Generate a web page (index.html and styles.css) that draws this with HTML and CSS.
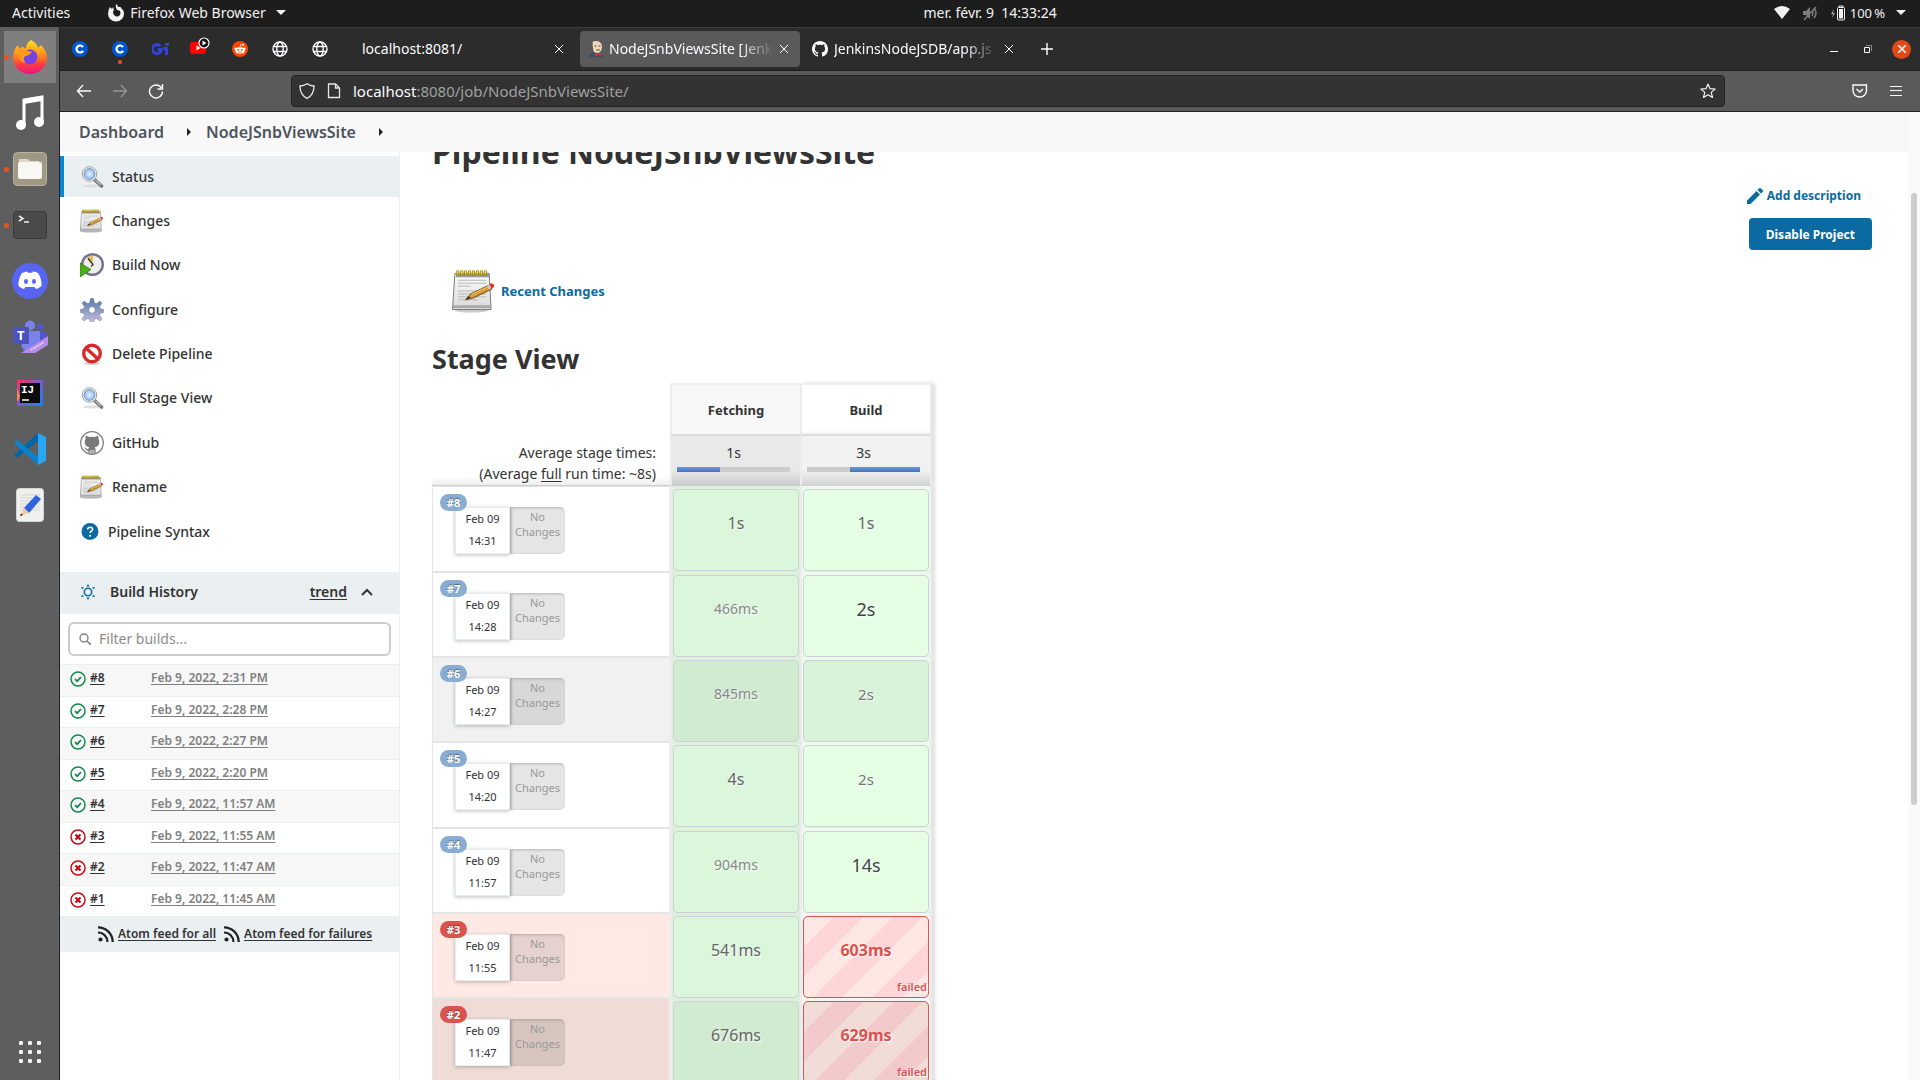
FILE: index.html
```html
<!DOCTYPE html>
<html lang="en">
<head>
<meta charset="utf-8">
<title>NodeJSnbViewsSite [Jenkins]</title>
<link rel="stylesheet" href="styles.css">
</head>
<body>
<svg class="defs" aria-hidden="true">
  <defs>
    <linearGradient id="g-fox" x1="0" y1="0" x2="0" y2="1"><stop offset="0" stop-color="#ffe226"/><stop offset=".45" stop-color="#ff8a16"/><stop offset=".75" stop-color="#ff3647"/><stop offset="1" stop-color="#e31587"/></linearGradient>
    <linearGradient id="g-paper" x1="0" y1="0" x2="0" y2="1"><stop offset="0" stop-color="#fdfdfd"/><stop offset="1" stop-color="#d8d8d8"/></linearGradient>
    <linearGradient id="g-gear" x1="0" y1="0" x2="0" y2="1"><stop offset="0" stop-color="#5a78a8"/><stop offset="1" stop-color="#c4bfdc"/></linearGradient>
    <linearGradient id="g-ij" x1="0" y1="0" x2="1" y2="1"><stop offset="0" stop-color="#fe2d6a"/><stop offset=".5" stop-color="#7a5bd0"/><stop offset="1" stop-color="#0a84ff"/></linearGradient>
    <radialGradient id="g-lens"><stop offset="0" stop-color="#eaf4fe"/><stop offset="1" stop-color="#8db9ea"/></radialGradient>
  </defs>
  <symbol id="i-close" viewBox="0 0 10 10"><path d="M1 1l8 8M9 1L1 9" stroke="currentColor" fill="none"/></symbol>
  <symbol id="i-globe" viewBox="0 0 16 16"><g fill="none" stroke="#fbfbfe" stroke-width="1.4"><circle cx="8" cy="8" r="7"/><ellipse cx="8" cy="8" rx="3.2" ry="7"/><path d="M1.5 5.5h13M1.5 10.5h13"/></g></symbol>
  <symbol id="i-octo" viewBox="0 0 16 16"><path fill="currentColor" d="M8 0C3.58 0 0 3.58 0 8c0 3.54 2.29 6.53 5.47 7.59.4.07.55-.17.55-.38 0-.19-.01-.82-.01-1.49-2.01.37-2.53-.49-2.69-.94-.09-.23-.48-.94-.82-1.13-.28-.15-.68-.52-.01-.53.63-.01 1.08.58 1.23.82.72 1.21 1.87.87 2.33.66.07-.52.28-.87.51-1.07-1.78-.2-3.64-.89-3.64-3.95 0-.87.31-1.59.82-2.15-.08-.2-.36-1.02.08-2.12 0 0 .67-.21 2.2.82.64-.18 1.32-.27 2-.27s1.36.09 2 .27c1.53-1.04 2.2-.82 2.2-.82.44 1.1.16 1.92.08 2.12.51.56.82 1.27.82 2.15 0 3.07-1.87 3.75-3.65 3.95.29.25.54.73.54 1.48 0 1.07-.01 1.93-.01 2.2 0 .21.15.46.55.38A8.01 8.01 0 0016 8c0-4.42-3.58-8-8-8z"/></symbol>
  <symbol id="i-c" viewBox="0 0 16 16"><circle cx="8" cy="8" r="8" fill="#0056d2"/><path d="M11 6.1A3.5 3.5 0 1 0 11 9.9" fill="none" stroke="#fff" stroke-width="2.2"/></symbol>
  <symbol id="i-search" viewBox="0 0 24 24"><ellipse cx="11" cy="21" rx="8" ry="1.5" fill="#ddd"/><path d="M14.500 14.500l7 6.500" stroke="#777" stroke-width="3.600" stroke-linecap="round"/><path d="M15.500 15l5.500 5" stroke="#bbb" stroke-width="1.400"/><circle cx="9.500" cy="9" r="7.300" fill="#f2f2f2" stroke="#a2a2a2"/><circle cx="9.500" cy="9" r="5.400" fill="url(#g-lens)" stroke="#6f97c6"/></symbol>
  <symbol id="i-notepad" viewBox="0 0 45 44"><ellipse cx="20" cy="42" rx="17" ry="2" fill="#ccc"/><path d="M3 4h35l2 37H.5z" fill="url(#g-paper)" stroke="#777"/><path d="M1 38h38" stroke="#aaa" stroke-width="3"/><path d="M4 4h34v4H4z" fill="#999"/><path d="M6 11h29M6 14h29M6 17h13M6 22h29M6 25h29M6 28h29M6 31h20" stroke="#b5b5b5"/><path d="M6 1v5M10 1v5M14 1v5M18 1v5M22 1v5M26 1v5M30 1v5M34 1v5" stroke="#8f7b00" stroke-width="3"/><path d="M6 1v4M10 1v4M14 1v4M18 1v4M22 1v4M26 1v4M30 1v4M34 1v4" stroke="#f5dc33" stroke-width="1.500"/><path d="M14 31l5-6 19-9 3 4-19 9z" fill="#d9982f" stroke="#6b4a12"/><path d="M20 25.500l18-8.500" stroke="#f3cf7d"/><path d="M14 31l3-4 2 2z" fill="#333"/><path d="M38 15l2-1q4 .5 3 4l-3 2z" fill="#e3342f"/><path d="M36 16l2-1 2 4-2 2z" fill="#c7ccd4"/></symbol>
  <symbol id="i-build" viewBox="0 0 24 24"><circle cx="12.500" cy="11.500" r="10.300" fill="#eeeeea" stroke="#77738f" stroke-width="2.400"/><path d="M12.500 11.500L7 5q3-2.500 6-2z" fill="#e0bf55"/><path d="M8 5.500l5 6-2 2" stroke="#333" fill="none" stroke-width="1.300"/><path d="M0 10l11 6.500L0 24z" fill="#4caf1a" stroke="#2f7c0c" stroke-width=".8"/></symbol>
  <symbol id="i-gear" viewBox="0 0 24 24"><g fill="url(#g-gear)" stroke="#7a83a8" stroke-width=".6"><path d="M10.500 0.500h3l.8 4.200 2.100.9 3.500-2.500 2.100 2.100-2.500 3.500.9 2.100 3.300.7v3l-3.300.8-.9 2.100 2.500 3.500-2.100 2.100-3.500-2.500-2.100.9-.8 3.100h-3l-.8-3.100-2.100-.9L4.100 23 2 20.900l2.500-3.500-.9-2.100-3.300-.8v-3l3.300-.7.900-2.100L2 5.200l2.100-2.100 3.500 2.500 2.100-.9z"/></g><circle cx="12" cy="12" r="3.400" fill="#fff" stroke="#8089ad"/></symbol>
  <symbol id="i-stop" viewBox="0 0 24 24"><ellipse cx="12" cy="21.500" rx="8" ry="1.500" fill="#ccc"/><circle cx="12" cy="11.500" r="8.300" fill="#fff" stroke="#d92a2a" stroke-width="3.400"/><path d="M6 6l12 11" stroke="#d92a2a" stroke-width="3.400"/></symbol>
  <symbol id="i-ghcat" viewBox="0 0 24 24"><circle cx="12" cy="12" r="11.300" fill="#fff" stroke="#7a7a7a" stroke-width="1.200"/><path d="M6 4.500l3 1.500q3-.6 6 0l3-1.500q1 2 .4 3.500 1.300 1.600.8 4.200-.7 3.600-4.500 4 .9 1 .9 2.500V22h-1.400v-3h-.7v4h-1.100v-4h-.8v4h-1.100v-4h-.7v3H8.400v-2Q5.700 20 5 17.500l-1-1q1.800-.4 2.700 1.500.7.700 1.700.3.100-1.400.9-2.100-3.800-.4-4.500-4Q4.300 9.600 5.600 8 5 6.500 6 4.500z" fill="#7a7a7a"/></symbol>
  <symbol id="i-help" viewBox="0 0 16 16"><circle cx="8" cy="8" r="8" fill="#0b6aa2"/><path d="M5.800 6.200q0-2.200 2.300-2.200t2.300 1.900q0 1.200-1.300 1.900-1 .5-1 1.600" fill="none" stroke="#fff" stroke-width="1.500"/><circle cx="8" cy="12" r="1" fill="#fff"/></symbol>
  <symbol id="i-ok" viewBox="0 0 16 16"><circle cx="8" cy="8" r="7" fill="none" stroke="#138a4f" stroke-width="1.500"/><path d="M5 8.200l2.200 2L11 6" fill="none" stroke="#138a4f" stroke-width="1.800"/></symbol>
  <symbol id="i-fail" viewBox="0 0 16 16"><circle cx="8" cy="8" r="7" fill="none" stroke="#c40a12" stroke-width="1.500"/><path d="M5.500 5.500l5 5M10.500 5.500l-5 5" fill="none" stroke="#c40a12" stroke-width="2.200"/></symbol>
  <symbol id="i-rss" viewBox="0 0 16 16"><circle cx="2.500" cy="13.500" r="2.100" fill="#222"/><path d="M0 6.500A9.500 9.500 0 0 1 9.500 16M0 1.300A14.700 14.700 0 0 1 14.700 16" fill="none" stroke="#222" stroke-width="2.200"/></symbol>
</svg>

<header class="topbar">
  <button class="top-item">Activities</button>
  <button class="top-item app-menu">
    <svg width="16" height="18" viewBox="0 0 16 18"><path fill="#f2f2f2" d="M8 0q2 1 2 3 3-1 3 1 3 2 3 6a8 7.500 0 0 1-16 0Q0 6 2 3l2 2 1-2 1 3q-2 2 0 5 3 3 6 0 1-2 0-4-1-1-3-1Q7 3 8 0z"/></svg>
    <span>Firefox Web Browser</span><i class="caret"></i>
  </button>
  <span class="clock">mer. févr. 9 &nbsp;14:33:24</span>
  <div class="tray">
    <svg width="16" height="14" viewBox="0 0 16 14"><path fill="#f2f2f2" d="M0 3q8-6 16 0L8 13z"/></svg>
    <svg width="16" height="16" viewBox="0 0 16 16"><path fill="#7d7d7d" d="M1 6h3l4-4v12l-4-4H1z"/><path d="M10 5q2 3 0 6M12 3q4 5 0 10M2 15L14 2" fill="none" stroke="#7d7d7d" stroke-width="1.500"/></svg>
    <span class="battery">
      <svg width="16" height="16" viewBox="0 0 16 16"><path d="M4 4L1 9h2l-1 4 3-5H3z" fill="#aaa"/><path d="M9 2V1h4v1" fill="none" stroke="#f2f2f2"/><rect x="7.500" y="2.500" width="7" height="12.500" rx="1" fill="none" stroke="#f2f2f2"/><path d="M9 4h4v9.500H9z" fill="#f2f2f2"/></svg>
      <span>100&#8239;%</span><i class="caret"></i>
    </span>
  </div>
</header>

<div class="desktop">
  <nav class="dock" aria-label="Applications">
    <button class="dock-item running selected" aria-label="Firefox"><svg width="36" height="36" viewBox="0 0 36 36"><path fill="url(#g-fox)" d="M19 1q6 3 7 8l3-3q6 6 6 13a17 16 0 0 1-34 0q0-8 5-13l1 4q2-2 4-2l3 2q0-6 5-9z"/><circle cx="18" cy="18" r="7.500" fill="#7542e5"/><path d="M6 10q6-1 10 2l4 1q-3 4-7 4-3 4 1 7-6-1-8-7z" fill="#ff9a1e"/></svg></button>
    <button class="dock-item" aria-label="Music"><svg width="32" height="36" viewBox="0 0 32 36"><path d="M10 29V5l18-3v25" fill="none" stroke="#fff" stroke-width="3"/><path d="M10 4l18-3v5l-18 3z" fill="#fff"/><circle cx="7" cy="30" r="5" fill="#fff"/><circle cx="25" cy="27" r="5" fill="#fff"/></svg></button>
    <button class="dock-item running" aria-label="Files"><svg width="34" height="34" viewBox="0 0 34 34"><rect x=".5" y=".5" width="33" height="33" rx="4" fill="#9f9882" stroke="#b9b29c"/><path d="M6 7h9l2 2h9v6H5z" fill="#ddd8c8"/><rect x="5" y="10" width="24" height="17" rx="2" fill="#f8f7f4"/></svg></button>
    <button class="dock-item running" aria-label="Terminal"><svg width="34" height="30" viewBox="0 0 34 30"><rect x=".5" y="1.500" width="33" height="27" rx="3" fill="#4a4a4a" stroke="#3a3a3a"/><path d="M6 6l4 2.500L6 11M11 12h5" fill="none" stroke="#eee" stroke-width="1.500"/></svg></button>
    <button class="dock-item" aria-label="Discord"><svg width="36" height="36" viewBox="0 0 36 36"><circle cx="18" cy="18" r="18" fill="#5865f2"/><path fill="#fff" d="M10 10q3-1.500 5-1.500l1 1.300h4l1-1.300q3 0 5 1.500 4 6 3.500 13-2.500 2.500-5.500 3l-1.500-2h-9l-1.500 2q-3-.5-5.500-3Q6 16 10 10z"/><ellipse cx="14" cy="18.500" rx="2" ry="2.400" fill="#5865f2"/><ellipse cx="22" cy="18.500" rx="2" ry="2.400" fill="#5865f2"/></svg></button>
    <button class="dock-item" aria-label="Teams"><svg width="36" height="34" viewBox="0 0 36 34"><circle cx="28" cy="7" r="3.500" fill="#5059c9"/><rect x="23" y="12" width="11" height="14" rx="3" fill="#5059c9"/><circle cx="18" cy="5.500" r="5" fill="#7b83eb"/><path d="M9 11h19v12a9.500 9.500 0 0 1-19 0z" fill="#7b83eb"/><rect x="1" y="7" width="16" height="17" rx="1.500" fill="#4b53bc"/><text x="5" y="20" class="t-teams">T</text><path d="M9 33L36 16v9L23 33z" fill="#b58be8"/><path d="M19 30l13-8" stroke="#ead9fb" stroke-width="2" stroke-dasharray="1.500 1"/></svg></button>
    <button class="dock-item" aria-label="IntelliJ IDEA"><svg width="26" height="26" viewBox="0 0 26 26"><rect width="26" height="26" rx="1" fill="url(#g-ij)"/><path d="M0 8l3 9-3 5z" fill="#f98b3c"/><rect x="3" y="3" width="20" height="20" fill="#0b0b0b"/><text x="4" y="13" class="t-ij">IJ</text><path d="M5 20h7" stroke="#fff" stroke-width="1.500"/></svg></button>
    <button class="dock-item" aria-label="Visual Studio Code"><svg width="32" height="32" viewBox="0 0 32 32"><path d="M0 22l3 3L24 8V0z" fill="#0065a9"/><path d="M0 10l3-3 21 17v8z" fill="#0a84cf"/><path d="M24 0l8 4v24l-8 4z" fill="#2aa6f2"/></svg></button>
    <button class="dock-item" aria-label="Text Editor"><svg width="28" height="34" viewBox="0 0 28 34"><rect x=".5" y=".5" width="27" height="33" rx="3" fill="#f0f0ee" stroke="#d5d5d5"/><path d="M4 7h20M4 10h20M4 13h20M4 16h20M4 19h20M4 22h20" stroke="#d5d5d5"/><path d="M8 20L20 7l5 4-12 14z" fill="#2f62dd"/><path d="M8 20l5 5-9 3z" fill="#f0c9a0"/><path d="M5 25.500l2 1.500-3 1z" fill="#222"/></svg></button>
    <button class="dock-item apps" aria-label="Show Applications"><svg width="24" height="24" viewBox="0 0 24 24" fill="#f2f2f2"><rect x="1" y="1" width="4" height="4" rx="1"/><rect x="10" y="1" width="4" height="4" rx="1"/><rect x="19" y="1" width="4" height="4" rx="1"/><rect x="1" y="10" width="4" height="4" rx="1"/><rect x="10" y="10" width="4" height="4" rx="1"/><rect x="19" y="10" width="4" height="4" rx="1"/><rect x="1" y="19" width="4" height="4" rx="1"/><rect x="10" y="19" width="4" height="4" rx="1"/><rect x="19" y="19" width="4" height="4" rx="1"/></svg></button>
  </nav>

  <div class="window">
    <div class="tabs">
      <button class="pin" aria-label="Coursera"><svg width="16" height="16"><use href="#i-c"/></svg></button>
      <button class="pin notify" aria-label="Coursera"><svg width="16" height="16"><use href="#i-c"/></svg></button>
      <button class="pin" aria-label="GI"><svg width="17" height="14" viewBox="0 0 17 14"><path d="M8.500 4.200A4.500 4.500 0 1 0 9 9V7.500H5.500" fill="none" stroke="#3140d8" stroke-width="3"/><path d="M11 5h5v8h-3V8h-2zM13 1h4v3h-4z" fill="#3140d8"/></svg></button>
      <button class="pin playing" aria-label="YouTube"><svg width="20" height="18" viewBox="0 0 20 18"><rect x="0" y="5" width="16" height="12" rx="3" fill="#f00"/><path d="M6.500 8.500v5l4-2.500z" fill="#fff"/><circle cx="14" cy="6" r="5" fill="#111" stroke="#fff" stroke-width="1.200"/><path d="M12.500 3.500v5l4-2.500z" fill="#fff"/></svg></button>
      <button class="pin" aria-label="Reddit"><svg width="16" height="16" viewBox="0 0 16 16"><circle cx="8" cy="8" r="8" fill="#ff4500"/><ellipse cx="8" cy="9.500" rx="4.800" ry="3.300" fill="#fff"/><circle cx="3.600" cy="7.800" r="1.200" fill="#fff"/><circle cx="12.400" cy="7.800" r="1.200" fill="#fff"/><circle cx="11" cy="3.800" r="1" fill="#fff"/><path d="M8 6.500l.6-3 2.200.4" fill="none" stroke="#fff" stroke-width=".7"/><path d="M6 11q2 1.200 4 0" fill="none" stroke="#ff4500" stroke-width=".7"/><circle cx="6.200" cy="8.900" r=".9" fill="#ff4500"/><circle cx="9.800" cy="8.900" r=".9" fill="#ff4500"/></svg></button>
      <button class="pin" aria-label="New page"><svg width="16" height="16"><use href="#i-globe"/></svg></button>
      <button class="pin" aria-label="New page"><svg width="16" height="16"><use href="#i-globe"/></svg></button>
      <div class="tab plain"><span class="tab-title">localhost:8081/</span><button class="x" aria-label="Close tab"><svg width="10" height="10"><use href="#i-close"/></svg></button></div>
      <div class="tab active"><svg width="16" height="16" viewBox="0 0 16 16"><path d="M1 16q0-4 5-5l5 1q4 1 4 4z" fill="#335061"/><path d="M3 5q0-5 5-5t6 5q0 6-4 7-5 0-6-4z" fill="#f0d6b7"/><path d="M2 7q0-5 3-6-1 3 0 6 0 2 1 4Q2 10 2 7z" fill="#5d5850"/><path d="M6.500 5h2M10.500 5h2M8 9h4" stroke="#555"/><path d="M7 12l3 1 3-1v3l-3-1-3 1z" fill="#d33833"/></svg><span class="tab-title">NodeJSnbViewsSite [Jenk</span><button class="x" aria-label="Close tab"><svg width="10" height="10"><use href="#i-close"/></svg></button></div>
      <div class="tab last"><svg width="16" height="16" viewBox="0 0 16 16"><use href="#i-octo"/></svg><span class="tab-title">JenkinsNodeJSDB/app.js</span><button class="x" aria-label="Close tab"><svg width="10" height="10"><use href="#i-close"/></svg></button></div>
      <button class="new-tab" aria-label="New tab"><svg width="12" height="12" viewBox="0 0 12 12"><path d="M6 0v12M0 6h12" stroke="#fff" stroke-width="1.400"/></svg></button>
      <div class="win-buttons">
        <button aria-label="Minimize"><svg width="8" height="8" viewBox="0 0 8 8"><path d="M0 6.500h8" stroke="#fff"/></svg></button>
        <button aria-label="Restore"><svg width="8" height="8" viewBox="0 0 8 8"><path d="M.5 2.500h5v5h-5z" fill="none" stroke="#fff"/><path d="M2 .5h5.500V6" fill="none" stroke="#888"/></svg></button>
        <button class="win-close" aria-label="Close"><svg width="8" height="8" viewBox="0 0 8 8"><path d="M0 0l8 8M8 0L0 8" stroke="#fff" stroke-width="1.500"/></svg></button>
      </div>
    </div>

    <div class="toolbar">
      <div class="nav-buttons">
        <button aria-label="Back"><svg width="16" height="16" viewBox="0 0 16 16"><path d="M7 2L1.500 8 7 14M2 8h13" fill="none" stroke="#fbfbfe" stroke-width="1.300"/></svg></button>
        <button aria-label="Forward"><svg width="16" height="16" viewBox="0 0 16 16"><path d="M9 2l5.500 6L9 14M14 8H1" fill="none" stroke="#979797" stroke-width="1.300"/></svg></button>
        <button aria-label="Reload"><svg width="16" height="16" viewBox="0 0 16 16"><path d="M13.500 5A6.500 6.500 0 1 0 14.500 8.500M14.500 1v5h-5" fill="none" stroke="#fbfbfe" stroke-width="1.400"/></svg></button>
      </div>
      <div class="urlbar">
        <svg width="16" height="16" viewBox="0 0 16 16"><path d="M8 .8Q11 3 15 3q0 9-7 12.300Q1 12 1 3q4 0 7-2.200z" fill="none" stroke="#e8e8e8" stroke-width="1.300"/></svg>
        <svg width="14" height="16" viewBox="0 0 14 16"><path d="M1.500 1h7l4 4v9.500h-11zM8.500 1v4h4" fill="none" stroke="#e8e8e8" stroke-width="1.300"/></svg>
        <a class="url" href="#">localhost<span>:8080/job/NodeJSnbViewsSite/</span></a>
        <svg width="18" height="16" viewBox="0 0 16 16"><path d="M8 1l2 4.700 5.200.4-4 3.300 1.300 5L8 11.700l-4.500 2.700 1.300-5-4-3.300 5.200-.4z" fill="none" stroke="#f2f2f2" stroke-width="1.200" stroke-linejoin="round"/></svg>
      </div>
      <div class="tools">
        <button aria-label="Pocket"><svg width="16" height="14" viewBox="0 0 16 14"><path d="M1 1h13.500v5.500a6.700 6.500 0 0 1-13.500 0zM4.500 5l3.300 3L11 5" fill="none" stroke="#fbfbfe" stroke-width="1.400"/></svg></button>
        <button aria-label="Menu"><svg width="12" height="12" viewBox="0 0 12 12"><path d="M0 1.500h12M0 5.500h12M0 10.500h12" stroke="#fbfbfe"/></svg></button>
      </div>
    </div>

    <div class="viewport">
      <div class="page">
        <nav class="crumbs"><a href="#">Dashboard</a><i></i><a href="#">NodeJSnbViewsSite</a><i></i></nav>
        <div class="columns">
          <aside class="side">
            <nav class="tasks">
              <a class="task current" href="#"><svg width="24" height="24"><use href="#i-search"/></svg>Status</a>
              <a class="task" href="#"><svg width="24" height="24"><use href="#i-notepad"/></svg>Changes</a>
              <a class="task" href="#"><svg width="24" height="24"><use href="#i-build"/></svg>Build Now</a>
              <a class="task" href="#"><svg width="24" height="24"><use href="#i-gear"/></svg>Configure</a>
              <a class="task" href="#"><svg width="24" height="24"><use href="#i-stop"/></svg>Delete Pipeline</a>
              <a class="task" href="#"><svg width="24" height="24"><use href="#i-search"/></svg>Full Stage View</a>
              <a class="task" href="#"><svg width="24" height="24"><use href="#i-ghcat"/></svg>GitHub</a>
              <a class="task" href="#"><svg width="24" height="24"><use href="#i-notepad"/></svg>Rename</a>
              <a class="task" href="#"><svg class="help" width="20" height="17"><use href="#i-help"/></svg>Pipeline Syntax</a>
            </nav>
            <section class="history">
              <div class="history-head">
                <svg width="16" height="16" viewBox="0 0 16 16"><circle cx="8" cy="8" r="3.700" fill="none" stroke="#0b6aa2" stroke-width="1.500"/><path d="M8 0l1.500 2.500h-3zM8 16l1.500-2.500h-3zM1 3l3 .5-1.800 2zM15 3l-3 .5 1.800 2zM1 13l3-.5-1.800-2zM15 13l-3-.5 1.800-2z" fill="#0b6aa2"/></svg>
                <h2>Build History</h2>
                <a href="#">trend</a>
                <svg width="12" height="8" viewBox="0 0 12 8"><path d="M1 7l5-5 5 5" fill="none" stroke="#333" stroke-width="2"/></svg>
              </div>
              <label class="filter">
                <svg width="12" height="12" viewBox="0 0 12 12"><circle cx="5" cy="5" r="4" fill="none" stroke="#808080" stroke-width="1.400"/><path d="M8 8l4 4" stroke="#808080" stroke-width="1.600"/></svg>
                <input type="text" placeholder="Filter builds..." aria-label="Filter builds">
              </label>
              <table class="builds">
                <tr><td><svg width="16" height="16"><use href="#i-ok"/></svg><a href="#">#8</a></td><td><a href="#">Feb 9, 2022, 2:31 PM</a></td></tr>
                <tr><td><svg width="16" height="16"><use href="#i-ok"/></svg><a href="#">#7</a></td><td><a href="#">Feb 9, 2022, 2:28 PM</a></td></tr>
                <tr><td><svg width="16" height="16"><use href="#i-ok"/></svg><a href="#">#6</a></td><td><a href="#">Feb 9, 2022, 2:27 PM</a></td></tr>
                <tr><td><svg width="16" height="16"><use href="#i-ok"/></svg><a href="#">#5</a></td><td><a href="#">Feb 9, 2022, 2:20 PM</a></td></tr>
                <tr><td><svg width="16" height="16"><use href="#i-ok"/></svg><a href="#">#4</a></td><td><a href="#">Feb 9, 2022, 11:57 AM</a></td></tr>
                <tr><td><svg width="16" height="16"><use href="#i-fail"/></svg><a href="#">#3</a></td><td><a href="#">Feb 9, 2022, 11:55 AM</a></td></tr>
                <tr><td><svg width="16" height="16"><use href="#i-fail"/></svg><a href="#">#2</a></td><td><a href="#">Feb 9, 2022, 11:47 AM</a></td></tr>
                <tr><td><svg width="16" height="16"><use href="#i-fail"/></svg><a href="#">#1</a></td><td><a href="#">Feb 9, 2022, 11:45 AM</a></td></tr>
              </table>
              <div class="feeds">
                <svg width="16" height="16"><use href="#i-rss"/></svg><a href="#">Atom feed for all</a>
                <svg width="16" height="16"><use href="#i-rss"/></svg><a href="#">Atom feed for failures</a>
              </div>
            </section>
          </aside>

          <main class="main">
            <h1>Pipeline NodeJSnbViewsSite</h1>
            <div class="actions">
              <a href="#"><svg width="16" height="16" viewBox="0 0 16 16"><path d="M0 12.500L9.500 3 13 6.500 3.500 16H0zM10.500 2l1.500-1.500q1-1 2 0L15.500 2q1 1 0 2L14 5.500z" fill="#0b6aa2"/></svg>Add description</a>
              <button class="primary">Disable Project</button>
            </div>
            <p class="recent"><svg width="44" height="44"><use href="#i-notepad"/></svg><a href="#">Recent Changes</a></p>
            <h2 class="stage-title">Stage View</h2>
            <table class="stages">
              <thead>
                <tr><td></td><th>Fetching</th><th>Build</th></tr>
                <tr class="totals"><td>Average stage times:<br>(Average <u>full</u> run time: ~8s)</td>
                  <td>1s<div class="bar"><b style="width:38%"></b></div></td>
                  <td>3s<div class="bar end"><b style="width:62%"></b></div></td></tr>
              </thead>
              <tbody>
                <tr><td><span class="badge">#8</span><div class="run"><div class="when"><span>Feb 09</span><span>14:31</span></div><div class="none">No Changes</div></div></td><td><div class="cell mid">1s</div></td><td><div class="cell mid">1s</div></td></tr>
                <tr><td><span class="badge">#7</span><div class="run"><div class="when"><span>Feb 09</span><span>14:28</span></div><div class="none">No Changes</div></div></td><td><div class="cell">466ms</div></td><td><div class="cell big">2s</div></td></tr>
                <tr class="dim"><td><span class="badge">#6</span><div class="run"><div class="when"><span>Feb 09</span><span>14:27</span></div><div class="none">No Changes</div></div></td><td><div class="cell">845ms</div></td><td><div class="cell mid soft">2s</div></td></tr>
                <tr><td><span class="badge">#5</span><div class="run"><div class="when"><span>Feb 09</span><span>14:20</span></div><div class="none">No Changes</div></div></td><td><div class="cell mid">4s</div></td><td><div class="cell mid soft">2s</div></td></tr>
                <tr><td><span class="badge">#4</span><div class="run"><div class="when"><span>Feb 09</span><span>11:57</span></div><div class="none">No Changes</div></div></td><td><div class="cell">904ms</div></td><td><div class="cell big">14s</div></td></tr>
                <tr class="bad"><td><span class="badge">#3</span><div class="run"><div class="when"><span>Feb 09</span><span>11:55</span></div><div class="none">No Changes</div></div></td><td><div class="cell mid">541ms</div></td><td><div class="cell mid failed">603ms<small>failed</small></div></td></tr>
                <tr class="bad dim"><td><span class="badge">#2</span><div class="run"><div class="when"><span>Feb 09</span><span>11:47</span></div><div class="none">No Changes</div></div></td><td><div class="cell mid">676ms</div></td><td><div class="cell mid failed">629ms<small>failed</small></div></td></tr>
              </tbody>
            </table>
          </main>
        </div>
      </div>
      <div class="scrollbar"><div class="thumb"></div></div>
    </div>
  </div>
</div>
</body>
</html>
```
FILE: styles.css
```css
* { box-sizing: border-box; }
body {
  margin: 0;
  height: 100vh;
  overflow: hidden;
  display: flex;
  flex-direction: column;
  background: #fff;
  color: #333;
  font: 14px/20px "Noto Sans", "Open Sans", sans-serif;
}
button {
  font: inherit;
  color: inherit;
  background: none;
  border: 0;
  padding: 0;
  display: flex;
  align-items: center;
  justify-content: center;
}
a { color: inherit; text-decoration: none; }
svg { flex: none; display: block; }
.defs { position: absolute; width: 0; height: 0; }

/* Desktop top bar */
.topbar {
  flex: none;
  height: 27px;
  padding: 0 14px 2px 12px;
  background: #1d1d1d;
  color: #f2f2f2;
  display: grid;
  grid-template-columns: auto 1fr auto 1fr;
  align-items: center;
}
.app-menu { gap: 6px; justify-self: start; margin-left: 38px; }
.clock { margin-left: 4px; }
.tray { display: flex; justify-content: flex-end; align-items: center; gap: 12px; font-size: 13px; }
.battery { display: flex; align-items: center; gap: 4px; }
.caret {
  margin-left: 4px;
  border: 5px solid transparent;
  border-top-color: currentColor;
  border-bottom: 0;
}
.tray .caret { margin-left: 7px; }

.desktop { flex: 1; min-height: 0; display: flex; }

/* Dock */
.dock {
  flex: none;
  width: 60px;
  padding-top: 2px;
  background: #5e5e5e;
  border-right: 1px solid #222;
  display: flex;
  flex-direction: column;
  align-items: center;
}
.dock-item { position: relative; width: 52px; height: 56px; }
.dock-item.selected { background: linear-gradient(#7f7f7f, #7f7f7f) center / 52px 52px no-repeat; }
.dock-item.running::before {
  content: "";
  position: absolute;
  left: 0;
  width: 5px;
  height: 5px;
  border-radius: 50%;
  background: #e95420;
}
.dock-item.apps { margin-top: auto; }
.t-teams { font: bold 13px "Open Sans", sans-serif; fill: #fff; }
.t-ij { font: bold 11px "Liberation Mono", monospace; fill: #fff; }

/* Browser window */
.window { flex: 1; min-width: 0; display: flex; flex-direction: column; }
.tabs {
  flex: none;
  height: 44px;
  background: #2c2c2c;
  border-top: 1px solid #3d3d3d;
  border-bottom: 1px solid #1c1c1c;
  color: #fbfbfe;
  display: flex;
  align-items: center;
}
.pin { position: relative; width: 40px; height: 100%; }
.notify::after {
  content: "";
  position: absolute;
  bottom: 6px;
  width: 4px;
  height: 4px;
  border-radius: 50%;
  background: #e95420;
}
.playing { padding-bottom: 6px; }
.tab {
  width: 220px;
  height: 36px;
  padding: 0 11px 0 8px;
  border-radius: 4px;
  display: flex;
  align-items: center;
  gap: 5px;
}
.tab.plain { width: 240px; padding: 0 16px 0 22px; }
.tab.active { background: #5a5a5a; }
.tab.last { width: 225px; padding-left: 12px; gap: 6px; }
.tab:not(.plain) .tab-title { mask-image: linear-gradient(to left, transparent, #000 34px); }
.tab-title { flex: 1; min-width: 0; overflow: hidden; white-space: nowrap; }
.new-tab { width: 44px; height: 36px; }
.win-buttons { margin-left: auto; padding-right: 9px; display: flex; align-items: center; gap: 15px; }
.win-buttons button { width: 19px; height: 19px; border-radius: 50%; }
.win-buttons .win-close { background: #df4a16; }

.toolbar {
  flex: none;
  height: 41px;
  background: #5a5a5a;
  border-bottom: 1px solid #222;
  display: flex;
  align-items: center;
}
.nav-buttons { width: 231px; padding-left: 16px; display: flex; gap: 20px; }
.urlbar {
  flex: 1;
  height: 32px;
  padding: 0 7px;
  background: #333;
  border: 1px solid #222;
  border-radius: 4px;
  display: flex;
  align-items: center;
  gap: 12px;
}
.url { flex: 1; color: #fbfbfe; font-size: 15px; }
.url span { color: #a0a0a0; }
.tools { width: 195px; padding-right: 18px; display: flex; justify-content: flex-end; gap: 22px; }

/* Web page */
.viewport { flex: 1; min-height: 0; display: flex; background: #fff; }
.page { flex: 1; min-width: 0; display: flex; flex-direction: column; overflow: hidden; }
.scrollbar { flex: none; width: 12px; padding: 81px 3px 0; background: #fafafa; }
.thumb { height: 69%; border-radius: 3px; background: #cdcdcd; }
.crumbs {
  position: relative;
  z-index: 1;
  flex: none;
  height: 40px;
  padding-left: 19px;
  background: #f8f8f8;
  color: #4d545d;
  font-size: 16px;
  font-weight: 600;
  display: flex;
  align-items: center;
}
.crumbs i {
  margin: 0 15px 0 23px;
  border: 4px solid transparent;
  border-left-color: #222;
  border-right: 0;
}
.columns { flex: 1; min-height: 0; display: flex; }

.side { flex: none; width: 340px; padding-top: 4px; border-right: 1px solid #eaeff2; }
.tasks { height: 396px; display: flex; flex-direction: column; justify-content: space-between; }
.task {
  height: 41px;
  padding-left: 16px;
  border-left: 4px solid transparent;
  font-weight: 500;
  display: flex;
  align-items: center;
  gap: 8px;
}
.task.current { background: #eaeff2; border-left-color: #0b86d1; }

.history { margin-top: 20px; font-size: 12px; font-weight: 600; }
.history-head {
  height: 42px;
  padding: 0 26px 2px 20px;
  background: #eaeff2;
  font-size: 14px;
  display: flex;
  align-items: center;
  gap: 14px;
}
.history-head h2 { flex: 1; margin: 0; font-size: 14px; font-weight: 600; }
.history-head a, .builds a, .feeds a { text-decoration: underline; text-underline-offset: 2px; }
.filter {
  height: 34px;
  margin: 8px;
  padding: 0 9px;
  border: 2px solid #ccc;
  border-radius: 6px;
  display: flex;
  align-items: center;
  gap: 8px;
}
.filter input { flex: 1; min-width: 0; border: 0; outline: 0; padding: 0; background: none; font: 14px/20px "Noto Sans", "Open Sans", sans-serif; }
.filter input::placeholder { color: #8c8c8c; }
.builds { width: 100%; height: 252px; border-collapse: separate; border-spacing: 0; }
.builds td { padding: 0 0 4px; border-top: 1px solid #eaeff2; }
.builds tr:nth-child(odd) { background: #f7f7f7; }
.builds td:first-child { width: 91px; padding-left: 10px; }
.builds td:last-child { color: #808080; }
.builds svg { display: inline-block; vertical-align: -5px; margin-right: 4px; }
.feeds {
  height: 36px;
  padding: 0 0 0 38px;
  background: #eaeff2;
  white-space: nowrap;
  display: flex;
  align-items: center;
  gap: 4px;
}
.feeds svg:not(:first-child) { margin-left: 4px; }

.main { position: relative; flex: 1; padding: 0 32px; }
h1 { margin: -20px 0 0; font-size: 32px; line-height: 40px; }
.actions {
  position: absolute;
  top: 34px;
  right: 36px;
  display: flex;
  flex-direction: column;
  gap: 12px;
  font-size: 12px;
  font-weight: 700;
}
.actions a { display: flex; align-items: center; gap: 4px; color: #0b6aa2; margin-left: -2px; }
.primary { height: 32px; padding: 1px 17px 0; border-radius: 4px; background: #0b6aa2; color: #fff; font-weight: 700; }
.recent { margin: 97px 0 0 20px; display: flex; align-items: center; gap: 5px; color: #0b6aa2; font-weight: 700; font-size: 13px; }
.stage-title { margin: 26px 0 4px; font-size: 27px; line-height: 40px; }

/* Stage table */
.stages { border-collapse: separate; border-spacing: 0; table-layout: fixed; width: 500px; }
.stages td, .stages th { padding: 0; }
.stages tr > :first-child { width: 238px; }
.stages tr > :nth-child(2) { width: 130px; }
.stages tr > :not(:first-child) { text-align: center; border-left: 2px solid #ececec; }
.stages tr > :last-child { box-shadow: 3px 0 4px #ddd; border-right: 2px solid #ececec; }
.stages th { height: 51px; border-top: 2px solid #efefef; font-size: 13px; font-weight: 700; }
.stages th:nth-child(2) { background: #f7f7f7; }
.stages th:nth-child(3) { background: #fff; }
.totals td { height: 52px; line-height: 21px; vertical-align: top; border-bottom: 1px solid #ccc; }
.stages .totals td:first-child { text-align: right; padding: 8px 14px 0 0; background: linear-gradient(transparent 42px, #eee); }
.stages .totals td:not(:first-child) { padding: 6px 10px 0 5px; border-top: 2px solid #ddd; background: linear-gradient(#f2f2f2 34px, #d4d4d4); }
.stages .totals td:nth-child(2) { background: linear-gradient(#e9e9e9 34px, #cbcbcb); }
.totals u { text-underline-offset: 2px; }
.bar { height: 5px; margin-top: 4px; background: #ccc; display: flex; }
.bar.end { justify-content: flex-end; }
.bar b { background: linear-gradient(#6f9ad6, #4470c8); }
.stages tbody tr { height: 85px; }
.stages tbody tr:nth-child(3n+1) { height: 86px; }
.stages tbody td { vertical-align: top; }
.stages tbody td:first-child { padding: 7px 0 0 7px; border: 1px solid #e5e5e5; border-right-color: #eee; }
.stages tbody td:nth-child(2) { background: #dcf0dc; }
.stages tbody td:nth-child(3) { background: #eefaee; }
.stages tbody .bad td:nth-child(3) { background: #f8f4f4; }
.badge {
  position: relative;
  display: block;
  width: 27px;
  height: 17px;
  border-radius: 9px;
  background: #88acd2;
  color: #fff;
  font-size: 11px;
  font-weight: 700;
  line-height: 17px;
  text-align: center;
  text-shadow: 0 -1px 1px #0006;
}
.run { width: 110px; height: 47px; margin: -4px 0 0 15px; display: grid; grid-template-columns: 1fr 1fr; font-size: 11px; }
.when { background: #fff; border: 1px solid #e7eef2; box-shadow: 0 1px 4px #0004; text-align: center; line-height: 22px; display: flex; flex-direction: column; }
.none { padding: 2px 4px; line-height: 15px; text-align: center; color: #999; background: #0000001a; border-radius: 0 5px 5px 0; box-shadow: inset 1px 1px 3px #0003; }
.cell {
  position: relative;
  height: 82px;
  margin: 3px 1px 0;
  padding-top: 23px;
  border: 1px solid #cdd0d4;
  border-radius: 5px;
  background: #dcf6dc;
  color: #888;
  text-shadow: 1px 1px 2px #fff;
}
td:nth-child(3) > .cell { background: #e4ffe4; }
.cell.mid { font-size: 16px; color: #666; }
.cell.mid.soft { font-size: 15px; color: #777; }
.cell.big { font-size: 18px; color: #444; }
.dim td:nth-child(2) > .cell { background: #d1ebd1; }
.dim td:nth-child(3) > .cell { background: #d9f3d9; }
.dim > td:first-child { background: #f1f1f1; }
.bad > td:first-child { background: #ffe9e5; }
.bad.dim > td:first-child { background: #f0dcd6; }
.bad .badge { background: #d9534f; }
.stages td > .cell.failed {
  border: 1px solid #d9534f;
  color: #d9534f;
  font-weight: 700;
  background: repeating-linear-gradient(135deg, #ffe8e4 0 21px, #ffd6d8 21px 42px);
}
.stages .dim td > .cell.failed { background: repeating-linear-gradient(135deg, #f2dcd8 0 21px, #f3cacc 21px 42px); }
.cell small { position: absolute; right: 1px; bottom: 0; font-size: 11px; font-weight: 600; }
```
